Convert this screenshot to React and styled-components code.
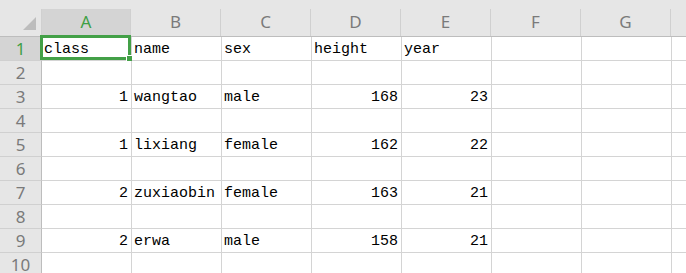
import styled, { createGlobalStyle } from "styled-components";

const GlobalStyle = createGlobalStyle`
  html, body {
    margin: 0;
    padding: 0;
    background: #ffffff;
    overflow: hidden;
  }
`;

const columns = ["A", "B", "C", "D", "E", "F", "G", ""];

const data = [
    ["class", "name", "sex", "height", "year"],
    [],
    [1, "wangtao", "male", 168, 23],
    [],
    [1, "lixiang", "female", 162, 22],
    [],
    [2, "zuxiaobin", "female", 163, 21],
    [],
    [2, "erwa", "male", 158, 21],
    [],
];

function App() {
    return (
        <>
            <GlobalStyle />
            <Sheet>
                <HeaderRow>
                    <Corner>
                        <Triangle />
                    </Corner>
                    {columns.map((c, i) => (
                        <ColHead key={i} $active={c === "A"} $last={i === columns.length - 1}>
                            {c}
                        </ColHead>
                    ))}
                </HeaderRow>
                {data.map((row, r) => (
                    <Row key={r}>
                        <RowHead $active={r === 0}>{r + 1}</RowHead>
                        {columns.map((_, c) => {
                            const v = row[c];
                            const isNum = typeof v === "number";
                            return (
                                <Cell key={c} $num={isNum} $last={c === columns.length - 1}>
                                    {v}
                                    {r === 0 && c === 0 && (
                                        <Selection>
                                            <Handle />
                                        </Selection>
                                    )}
                                </Cell>
                            );
                        })}
                    </Row>
                ))}
            </Sheet>
        </>
    );
}

const Sheet = styled.div`
    width: 686px;
    display: flex;
    flex-direction: column;
`;

const HeaderRow = styled.div`
    display: flex;
    height: 37px;
    padding-top: 9px;
    box-sizing: border-box;
    background: #e6e6e6;
    border-bottom: 1px solid #bdbdbd;
`;

const Corner = styled.div`
    width: 42px;
    flex: none;
    display: flex;
    justify-content: flex-end;
    padding: 8px 6px 0 0;
    box-sizing: border-box;
`;

const Triangle = styled.div`
    width: 0;
    height: 0;
    border-left: 13px solid transparent;
    border-bottom: 13px solid #bdbdbd;
`;

const ColHead = styled.div`
    width: 90px;
    flex: ${(p) => (p.$last ? "1" : "none")};
    box-sizing: border-box;
    border-right: ${(p) => (p.$last ? "none" : "1px solid #d0d0d0")};
    border-left: ${(p) => (p.$active ? "1px solid #d0d0d0" : "none")};
    margin-left: ${(p) => (p.$active ? "-1px" : "0")};
    background: ${(p) => (p.$active ? "#d4d4d4" : "transparent")};
    color: ${(p) => (p.$active ? "#3f9f45" : "#7a7a7a")};
    font-family: "Noto Sans", "Liberation Sans", sans-serif;
    font-size: 17px;
    line-height: 26px;
    text-align: center;
`;

const Row = styled.div`
    display: flex;
    height: 24px;
`;

const RowHead = styled.div`
    width: 42px;
    flex: none;
    box-sizing: border-box;
    background: ${(p) => (p.$active ? "#d4d4d4" : "#e6e6e6")};
    border-right: 1px solid #bdbdbd;
    border-bottom: 1px solid #d0d0d0;
    color: ${(p) => (p.$active ? "#3f9f45" : "#7a7a7a")};
    font-family: "Noto Sans", "Liberation Sans", sans-serif;
    font-size: 17px;
    line-height: 23px;
    text-align: center;
`;

const Cell = styled.div`
    position: relative;
    width: 90px;
    flex: ${(p) => (p.$last ? "1" : "none")};
    box-sizing: border-box;
    border-right: ${(p) => (p.$last ? "none" : "1px solid #d4d4d4")};
    border-bottom: 1px solid #d4d4d4;
    padding: 1px 3px 0 2px;
    font-family: "Liberation Mono", "DejaVu Sans Mono", monospace;
    font-size: 15px;
    line-height: 23px;
    color: #000000;
    text-align: ${(p) => (p.$num ? "right" : "left")};
    white-space: nowrap;
`;

const Selection = styled.div`
    position: absolute;
    left: -2px;
    top: -2px;
    right: 0;
    bottom: 0;
    border: 3px solid #43a047;
    pointer-events: none;
`;

const Handle = styled.div`
    position: absolute;
    right: -5px;
    bottom: -5px;
    width: 5px;
    height: 5px;
    background: #43a047;
    border: 1px solid #ffffff;
`;

export default App;
